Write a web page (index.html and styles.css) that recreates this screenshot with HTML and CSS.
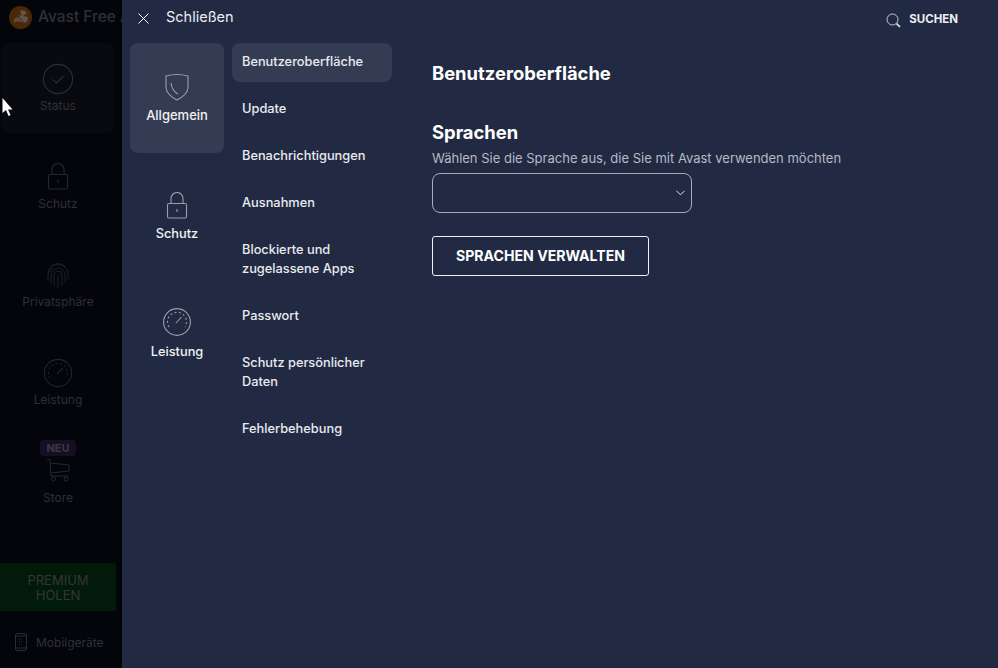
FILE: index.html
```html
<!DOCTYPE html>
<html lang="de">
<head>
    <meta charset="UTF-8">
    <title>Avast Free Antivirus</title>
    <link rel="stylesheet" href="styles.css">
</head>
<body>
<div class="app">
    <!-- dimmed main window behind the settings panel -->
    <aside class="sidebar">
        <div class="brand">
            <svg class="brand-logo" width="23" height="23" viewBox="0 0 23 23">
                <circle cx="11.5" cy="11.5" r="11.5" fill="#4a2706"/>
                <path d="M11 5 Q15 3 18 7 L13 11 Z" fill="#5c564c"/>
                <path d="M9 9 L19 11 Q19 15 16 17 Z" fill="#5c564c"/>
                <path d="M5 13 Q8 10 11 12 L16 17.500 Q10 14 5 17 Z" fill="#544e45"/>
            </svg>
            <span class="brand-name">Avast Free Antivirus</span>
        </div>
        <a class="side-item side-active">
            <svg width="32" height="32" viewBox="0 0 32 32" fill="none" stroke="#2d2e32" stroke-width="1.1">
                <circle cx="16" cy="16" r="14.6"/>
                <path d="M10.5 16.5 L14.5 20 L21.5 13"/>
            </svg>
            <span>Status</span>
        </a>
        <a class="side-item">
            <svg width="32" height="32" viewBox="0 0 32 32" fill="none" stroke="#27282c" stroke-width="1.1">
                <rect x="6.5" y="13.5" width="19" height="14.5" rx="1.5"/>
                <path d="M10 13.5 V8.5 A6 6 0 0 1 22 8.5 V13.5"/>
                <path d="M16 19 V22"/>
            </svg>
            <span>Schutz</span>
        </a>
        <a class="side-item">
            <svg width="32" height="32" viewBox="0 0 32 32" fill="none" stroke="#1f2024" stroke-width="1">
                <path d="M8 8 A11 11 0 0 1 24 8"/>
                <path d="M6 13 A10.5 10.5 0 0 1 26 13 V20"/>
                <path d="M6 22 V16 A10 9 0 0 1 11 9"/>
                <path d="M9 25 V16 A7 7 0 0 1 23 16 V24"/>
                <path d="M12 27 V16 A4 4 0 0 1 20 16 V27"/>
                <path d="M16 29 V16"/>
            </svg>
            <span>Privatsphäre</span>
        </a>
        <a class="side-item">
            <svg width="32" height="32" viewBox="0 0 32 32" fill="none" stroke="#232428" stroke-width="1.1">
                <circle cx="16" cy="16" r="13.6"/>
                <path d="M8 21 A9.500 9.500 0 1 1 24 21" stroke-dasharray="2 2.400"/>
                <path d="M15 17 L21 11"/>
            </svg>
            <span>Leistung</span>
        </a>
        <a class="side-item side-store">
            <b class="badge">NEU</b>
            <svg width="24" height="24" viewBox="0 0 24 24" fill="none" stroke="#27282c" stroke-width="1">
                <path d="M1 1 L4 2 L5 18 H22"/>
                <path d="M4.500 5 L23 7 V13 L5 15"/>
                <circle cx="7.500" cy="21" r="2"/>
                <circle cx="20" cy="21" r="2"/>
            </svg>
            <span>Store</span>
        </a>
        <div class="premium">PREMIUM<br>HOLEN</div>
        <div class="mobile">
            <svg width="12" height="18" viewBox="0 0 12 18" fill="none" stroke="#2b2c30" stroke-width="1">
                <rect x="0.500" y="0.500" width="11" height="17" rx="1.500"/>
                <path d="M1 3 H11 M1 15 H11"/>
                <path d="M4 6 H8 M4 8.500 H8 M4 11 H8" stroke-dasharray="1 1"/>
            </svg>
            <span>Mobilgeräte</span>
        </div>
    </aside>

    <!-- settings panel -->
    <main class="panel">
        <header class="panel-top">
            <div class="close">
                <svg width="11" height="11" viewBox="0 0 11 11" fill="none" stroke="#fff" stroke-width="1">
                    <path d="M0.500 0.500 L10.500 10.500 M10.500 0.500 L0.500 10.500"/>
                </svg>
                <span>Schließen</span>
            </div>
            <div class="search">
                <svg width="15" height="15" viewBox="0 0 15 15" fill="none" stroke="#c9ccd4" stroke-width="1">
                    <circle cx="6.500" cy="6.500" r="5.500"/>
                    <path d="M10.500 10.500 L14 14" stroke-width="1.800"/>
                </svg>
                <span>SUCHEN</span>
            </div>
        </header>

        <div class="panel-body">
            <nav class="cats">
                <a class="cat cat-active">
                    <svg width="26" height="28" viewBox="0 0 26 28" fill="none" stroke="#9a9eaa" stroke-width="1.100">
                        <path d="M2 3 Q13 0 24 3 V15 Q23 22 13 27 Q3 22 2 15 Z"/>
                        <path d="M7 10 Q8 18 14 21"/>
                    </svg>
                    <span>Allgemein</span>
                </a>
                <a class="cat cat-schutz">
                    <svg width="22" height="27" viewBox="0 0 22 27" fill="none" stroke="#9a9eaa" stroke-width="1.100">
                        <rect x="1.500" y="11.500" width="19" height="14.500" rx="1.500"/>
                        <path d="M5 11.500 V6.500 A6 6 0 0 1 17 6.500 V11.500"/>
                        <path d="M11 17 V20"/>
                    </svg>
                    <span>Schutz</span>
                </a>
                <a class="cat cat-leistung">
                    <svg width="28" height="28" viewBox="0 0 28 28" fill="none" stroke="#9a9eaa" stroke-width="1.100">
                        <circle cx="14" cy="14" r="13.400"/>
                        <path d="M6 19 A9.500 9.500 0 1 1 22 19" stroke-dasharray="2 2.400"/>
                        <path d="M13 15 L18.500 9"/>
                    </svg>
                    <span>Leistung</span>
                </a>
            </nav>

            <nav class="subs">
                <a class="sub sub-active">Benutzeroberfläche</a>
                <a class="sub">Update</a>
                <a class="sub">Benachrichtigungen</a>
                <a class="sub">Ausnahmen</a>
                <a class="sub">Blockierte und zugelassene Apps</a>
                <a class="sub">Passwort</a>
                <a class="sub">Schutz persönlicher Daten</a>
                <a class="sub">Fehlerbehebung</a>
            </nav>

            <section class="content">
                <h1>Benutzeroberfläche</h1>
                <h2>Sprachen</h2>
                <p>Wählen Sie die Sprache aus, die Sie mit Avast verwenden möchten</p>
                <div class="select">
                    <svg width="9" height="6" viewBox="0 0 9 6" fill="none" stroke="#e4e5e9" stroke-width="1">
                        <path d="M0.500 0.800 L4.500 4.800 L8.500 0.800"/>
                    </svg>
                </div>
                <button class="manage">SPRACHEN VERWALTEN</button>
            </section>
        </div>
    </main>
</div>
<!-- mouse pointer -->
<svg class="pointer" width="12" height="19" viewBox="0 0 12 19">
    <path d="M1.500 0 V15 L5 12 L7.500 18 L9.500 17 L7 11.500 L11.500 11.500 Z" fill="#fff"/>
</svg>
</body>
</html>
```

FILE: styles.css
```css
html, body {
    margin: 0;
    height: 100%;
    overflow: hidden;
}

body {
    background-color: #04050a;
    font-family: Inter, "Liberation Sans", sans-serif;
    color: #fff;
}

a {
    display: block;
}

.app {
    display: flex;
    height: 668px;
}

/* sidebar */
.sidebar {
    width: 122px;
    flex-shrink: 0;
    display: flex;
    flex-direction: column;
    overflow: hidden;
    background-color: #04050a;
    color: #2f3034;
    font-size: 12px;
}

.brand {
    height: 43px;
    padding: 5px 0 0 9px;
    box-sizing: border-box;
    display: flex;
    align-items: flex-start;
    gap: 6px;
    font-size: 15.500px;
    font-weight: 500;
    color: #2f3034;
    line-height: 23px;
}

.brand-logo {
    flex-shrink: 0;
    margin-top: 1px;
}

.brand-name {
    flex-grow: 1;
    height: 23px;
    overflow: hidden;
    white-space: nowrap;
}

.side-item {
    width: 112px;
    height: 98px;
    margin-left: 2px;
    box-sizing: border-box;
    padding-top: 20px;
    display: flex;
    flex-direction: column;
    align-items: center;
    gap: 1px;
    line-height: 19px;
    border-radius: 8px;
}

.side-active {
    height: 90px;
    margin-bottom: 8px;
    background-color: #090a0f;
}

.side-store {
    padding-top: 5px;
    gap: 0;
    height: 101px;
}

.side-store svg {
    margin-top: 2px;
}

.side-store span {
    margin-top: 6px;
}

.badge {
    padding: 0 6px;
    height: 16px;
    line-height: 16px;
    border-radius: 4px;
    background-color: #170d24;
    color: #38353f;
    font-size: 11px;
    font-weight: 800;
}

.premium {
    width: 116px;
    height: 48px;
    margin-top: 27px;
    box-sizing: border-box;
    padding-top: 10px;
    text-align: center;
    line-height: 15px;
    font-size: 13px;
    color: #35372f;
    background-color: #021a0a;
    border-radius: 0 2px 2px 0;
}

.mobile {
    display: flex;
    align-items: center;
    gap: 9px;
    padding: 22px 0 0 15px;
    color: #2f3034;
    font-size: 12px;
    white-space: nowrap;
}

/* settings panel */
.panel {
    flex-grow: 1;
    background-color: #212a42;
}

.panel-top {
    height: 43px;
    padding-left: 16px;
    padding-right: 40px;
    display: flex;
    justify-content: space-between;
    box-sizing: border-box;
}

.close {
    display: flex;
    align-items: center;
    gap: 17px;
    height: 36px;
    font-size: 14.500px;
    font-weight: 400;
    color: #eceef1;
}

.close span {
    margin-top: -3px;
}

.search {
    display: flex;
    align-items: center;
    gap: 8px;
    height: 38px;
    font-size: 11.500px;
    font-weight: 700;
    color: #eceef1;
}

.search svg {
    margin-top: 3px;
}

.panel-body {
    display: flex;
    padding-left: 8px;
}

.cats {
    width: 94px;
    margin-right: 8px;
    flex-shrink: 0;
}

.cat {
    display: flex;
    flex-direction: column;
    align-items: center;
    font-size: 12.800px;
    font-weight: 500;
    line-height: 19px;
    color: #f1f2f4;
    border-radius: 8px;
}

.cat-active {
    height: 110px;
    box-sizing: border-box;
    padding-top: 30px;
    background-color: #343c53;
    font-size: 13px;
}

.cat-active span {
    margin-top: 5px;
}

.cat-schutz {
    margin-top: 39px;
}

.cat-schutz span {
    margin-top: 5px;
}

.cat-leistung {
    margin-top: 65px;
}

.cat-leistung span {
    margin-top: 6px;
}

.subs {
    width: 160px;
    flex-shrink: 0;
    display: flex;
    flex-direction: column;
    gap: 8px;
}

.sub {
    padding: 9px 10px 11px;
    font-size: 12.800px;
    font-weight: 500;
    line-height: 19px;
    color: #e9ebee;
    border-radius: 8px;
}

.sub-active {
    background-color: #343c53;
}

.content {
    padding-left: 40px;
}

h1 {
    margin: 18px 0 0;
    font-size: 18.400px;
    line-height: 24px;
    font-weight: 700;
}

h2 {
    margin: 35px 0 0;
    font-size: 18.400px;
    line-height: 24px;
    font-weight: 700;
}

.content p {
    margin: 5px 0 0;
    font-size: 13px;
    line-height: 19px;
    color: #b7bac4;
    white-space: nowrap;
}

.select {
    width: 260px;
    height: 40px;
    margin-top: 5px;
    padding-right: 6px;
    box-sizing: border-box;
    display: flex;
    align-items: center;
    justify-content: flex-end;
    border: 1px solid #a9acb6;
    border-radius: 8px;
}

.manage {
    display: block;
    width: 217px;
    height: 40px;
    margin-top: 23px;
    padding: 0 0 2px;
    background: transparent;
    border: 1px solid #f0f1f3;
    border-radius: 3px;
    color: #fff;
    font-family: inherit;
    font-size: 14.100px;
    font-weight: 700;
}

.pointer {
    position: absolute;
    left: 1px;
    top: 98px;
}
```
